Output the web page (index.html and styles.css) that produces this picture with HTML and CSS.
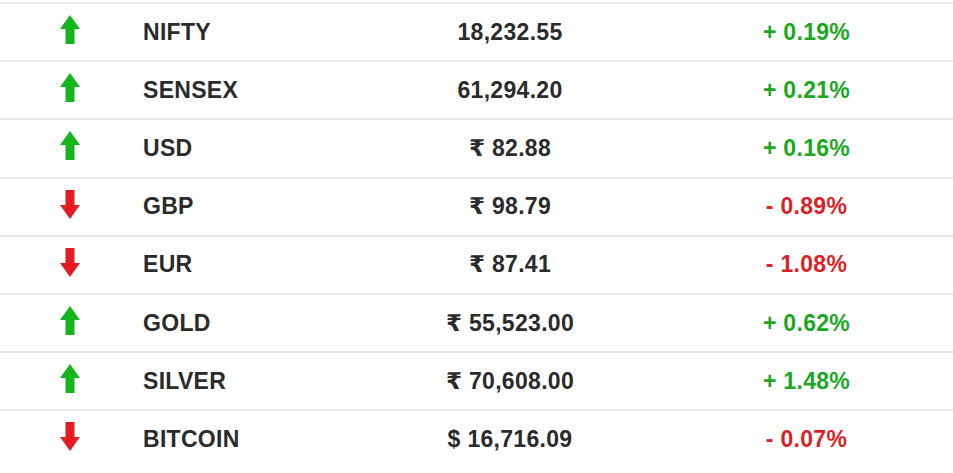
FILE: index.html
```html
<!DOCTYPE html>
<html>
<head>
<meta charset="utf-8">
<link rel="stylesheet" href="styles.css">
</head>
<body>
<div class="ticker">
  <div class="row">
    <div class="dir"><svg class="arrow up" viewBox="0 0 20 29"><polygon points="10,0 20,14 14.5,14 14.5,29 5.5,29 5.5,14 0,14"/></svg></div>
    <div class="name">NIFTY</div>
    <div class="value">18,232.55</div>
    <div class="change up">+ 0.19%</div>
  </div>
  <div class="row">
    <div class="dir"><svg class="arrow up" viewBox="0 0 20 29"><polygon points="10,0 20,14 14.5,14 14.5,29 5.5,29 5.5,14 0,14"/></svg></div>
    <div class="name">SENSEX</div>
    <div class="value">61,294.20</div>
    <div class="change up">+ 0.21%</div>
  </div>
  <div class="row">
    <div class="dir"><svg class="arrow up" viewBox="0 0 20 29"><polygon points="10,0 20,14 14.5,14 14.5,29 5.5,29 5.5,14 0,14"/></svg></div>
    <div class="name">USD</div>
    <div class="value">₹ 82.88</div>
    <div class="change up">+ 0.16%</div>
  </div>
  <div class="row">
    <div class="dir"><svg class="arrow down" viewBox="0 0 20 29"><polygon points="5.5,0 14.5,0 14.5,15 20,15 10,29 0,15 5.5,15"/></svg></div>
    <div class="name">GBP</div>
    <div class="value">₹ 98.79</div>
    <div class="change down">- 0.89%</div>
  </div>
  <div class="row">
    <div class="dir"><svg class="arrow down" viewBox="0 0 20 29"><polygon points="5.5,0 14.5,0 14.5,15 20,15 10,29 0,15 5.5,15"/></svg></div>
    <div class="name">EUR</div>
    <div class="value">₹ 87.41</div>
    <div class="change down">- 1.08%</div>
  </div>
  <div class="row">
    <div class="dir"><svg class="arrow up" viewBox="0 0 20 29"><polygon points="10,0 20,14 14.5,14 14.5,29 5.5,29 5.5,14 0,14"/></svg></div>
    <div class="name">GOLD</div>
    <div class="value">₹ 55,523.00</div>
    <div class="change up">+ 0.62%</div>
  </div>
  <div class="row">
    <div class="dir"><svg class="arrow up" viewBox="0 0 20 29"><polygon points="10,0 20,14 14.5,14 14.5,29 5.5,29 5.5,14 0,14"/></svg></div>
    <div class="name">SILVER</div>
    <div class="value">₹ 70,608.00</div>
    <div class="change up">+ 1.48%</div>
  </div>
  <div class="row">
    <div class="dir"><svg class="arrow down" viewBox="0 0 20 29"><polygon points="5.5,0 14.5,0 14.5,15 20,15 10,29 0,15 5.5,15"/></svg></div>
    <div class="name">BITCOIN</div>
    <div class="value">$ 16,716.09</div>
    <div class="change down">- 0.07%</div>
  </div>
</div>
</body>
</html>
```
FILE: styles.css
```css
html, body {
  margin: 0;
  padding: 0;
  background: #ffffff;
}
body {
  font-family: "Liberation Sans", Arial, "DejaVu Sans", sans-serif;
  font-weight: bold;
  font-size: 23px;
  letter-spacing: 0.3px;
  color: #2b2b2b;
  overflow: hidden;
}
.ticker {
  padding-top: 2px;
}
.row {
  display: grid;
  grid-template-columns: 140px 230px 280px 303px;
  align-items: center;
  height: 58.2px;
  box-sizing: border-box;
  border-top: 2px solid #e8e8e8;
}
.dir {
  display: flex;
  justify-content: center;
  padding-bottom: 5px;
}
.arrow {
  width: 20px;
  height: 29px;
  display: block;
}
.arrow.up { fill: #13b61b; }
.arrow.down { fill: #e41b23; }
.name {
  padding-left: 3px;
}
.value {
  text-align: center;
}
.change {
  text-align: center;
  padding-left: 10px;
}
.change.up { color: #1ba81f; }
.change.down { color: #dc1f26; }
```
